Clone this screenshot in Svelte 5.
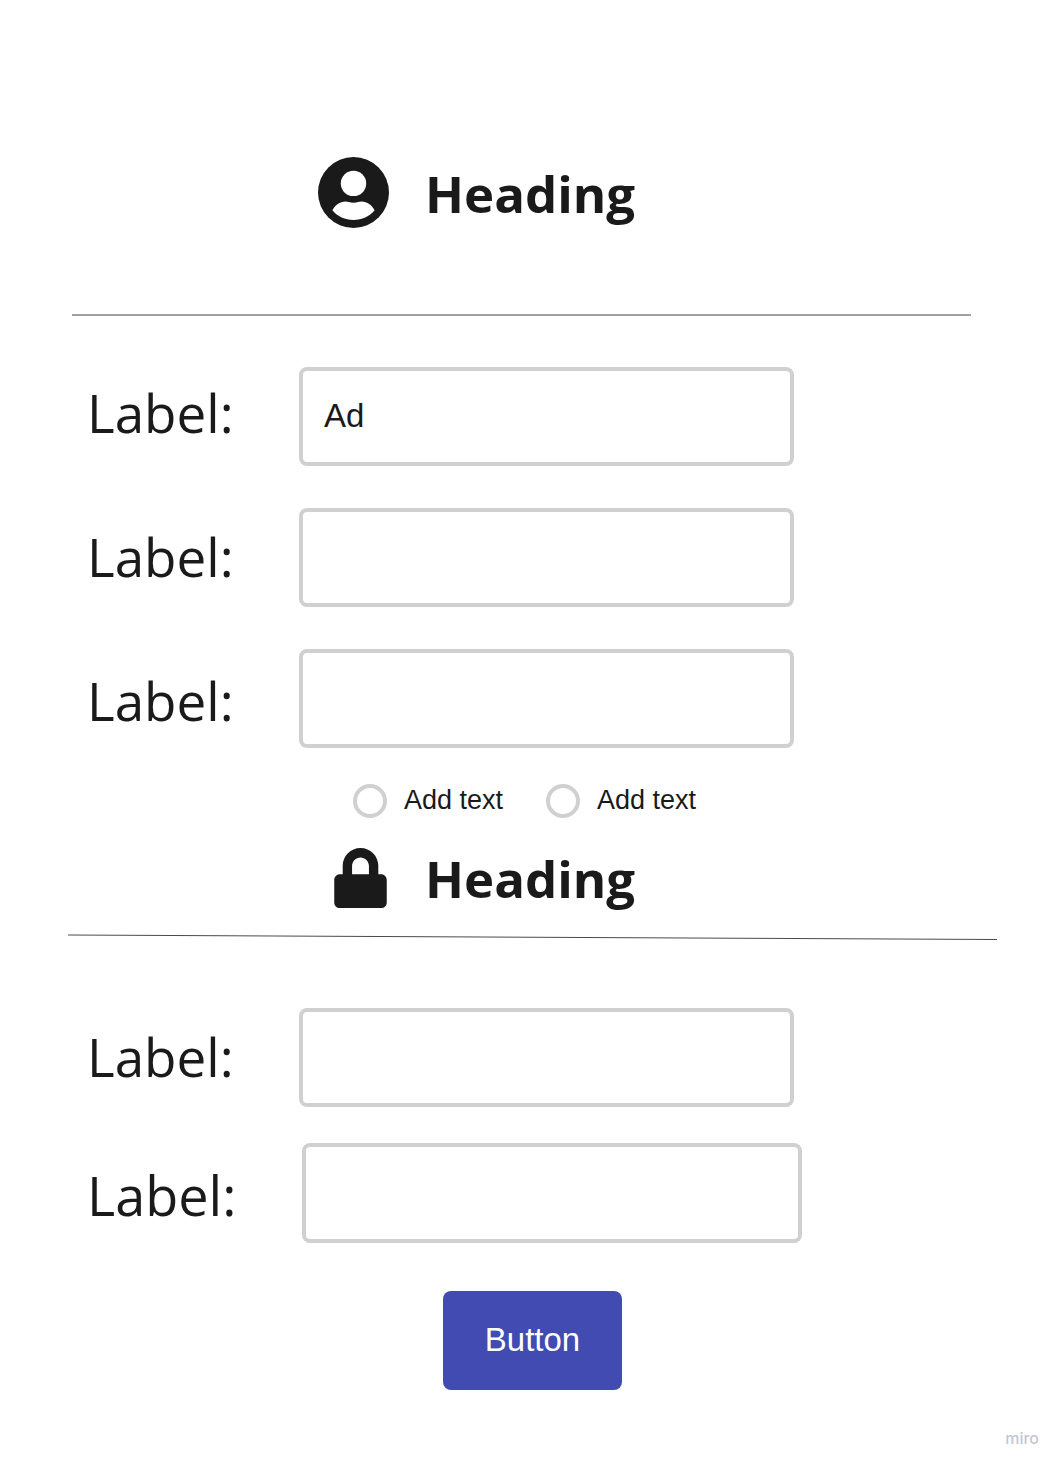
<script>
  let first = $state('Ad');
  let second = $state('');
  let third = $state('');
  let fourth = $state('');
  let fifth = $state('');
  let choice = $state('');
</script>

<main class="page">
  <form onsubmit={(event) => event.preventDefault()}>
    <header class="title">
      <svg class="avatar" viewBox="0 0 71 71" aria-hidden="true">
        <circle cx="35.5" cy="35.5" r="35.5" fill="#1a1a1a" />
        <circle cx="35.5" cy="26.4" r="12.7" fill="#fff" />
        <path
          d="M14.4 53.3C17 48.5 21.8 44.6 27.5 44.6C30 44.6 31.5 45.7 35.5 45.7C39.5 45.7 41 44.6 43.5 44.6C49.2 44.6 54 48.5 56.6 53.3C51.5 59.5 44 63 35.5 63C27 63 19.5 59.5 14.4 53.3Z"
          fill="#fff"
        />
      </svg>
      <h2>Heading</h2>
    </header>

    <hr class="rule" />

    <section class="fields">
      <div class="labels">
        <label for="field-1">Label:</label>
        <label for="field-2">Label:</label>
        <label for="field-3">Label:</label>
      </div>
      <div class="inputs">
        <input id="field-1" type="text" bind:value={first} />
        <input id="field-2" type="text" bind:value={second} />
        <input id="field-3" type="text" bind:value={third} />
      </div>
    </section>

    <div class="choices">
      <label class="choice">
        <input type="radio" name="choice" value="one" bind:group={choice} />
        <span>Add text</span>
      </label>
      <label class="choice">
        <input type="radio" name="choice" value="two" bind:group={choice} />
        <span>Add text</span>
      </label>
    </div>

    <header class="title secure">
      <svg class="lock" viewBox="0 0 448 512" aria-hidden="true">
        <path
          d="M400 224h-24v-72C376 68.2 307.8 0 224 0S72 68.2 72 152v72H48c-26.5 0-48 21.5-48 48v192c0 26.5 21.5 48 48 48h352c26.5 0 48-21.5 48-48V272c0-26.5-21.5-48-48-48zm-104 0H152v-72c0-39.7 32.3-72 72-72s72 32.3 72 72v72z"
          fill="#1a1a1a"
        />
      </svg>
      <h2>Heading</h2>
    </header>

    <svg class="slant" viewBox="0 0 928 6" preserveAspectRatio="none" aria-hidden="true">
      <line x1="0" y1="1" x2="928" y2="5.5" stroke="#4a4a4a" stroke-width="1" vector-effect="non-scaling-stroke" />
    </svg>

    <section class="fields compact">
      <div class="labels">
        <label for="field-4">Label:</label>
        <label class="large" for="field-5">Label:</label>
      </div>
      <div class="inputs">
        <input id="field-4" type="text" bind:value={fourth} />
        <input id="field-5" class="large" type="text" bind:value={fifth} />
      </div>
    </section>

    <button type="submit">Button</button>
  </form>

  <footer>miro</footer>
</main>

<style>
  :global(body) {
    margin: 0;
    background: #fff;
  }

  .page {
    box-sizing: border-box;
    min-height: 100vh;
    padding-top: 157px;
    color: #1a1a1a;
    font-family: 'Open Sans', 'Noto Sans', sans-serif;
  }

  form {
    display: flex;
    flex-direction: column;
    padding: 0 66px 0 68px;
  }

  .title {
    display: flex;
    align-items: flex-start;
    gap: 36px;
    padding-left: 250px;
  }

  .secure {
    align-items: center;
    gap: 38px;
    margin-top: 24px;
    padding-left: 266px;
  }

  .avatar {
    width: 71px;
    height: 71px;
  }

  .lock {
    width: 53px;
    height: 60px;
  }

  h2 {
    margin: 0;
    font-size: 51px;
    line-height: 72px;
    font-weight: 700;
  }

  .rule {
    height: 2px;
    margin: 85px 26px 51px 4px;
    border: 0;
    background: #a0a0a0;
  }

  .slant {
    width: 100%;
    height: 6px;
    margin-top: 20px;
  }

  .fields {
    display: grid;
    grid-template-columns: 212px minmax(0, 1fr);
    padding: 0 195px 0 19px;
  }

  .labels {
    display: flex;
    flex-direction: column;
    gap: 72px;
    padding-top: 10px;
    font-size: 53px;
    line-height: 72px;
  }

  .inputs {
    display: flex;
    flex-direction: column;
    gap: 42px;
    padding-right: 8px;
  }

  .compact {
    margin-top: 68px;
  }

  .compact .labels {
    gap: 66px;
    padding-top: 13px;
  }

  .compact .inputs {
    gap: 36px;
  }

  .labels .large {
    font-size: 54px;
  }

  input[type='text'] {
    box-sizing: border-box;
    width: 100%;
    height: 99px;
    padding: 0 21px 2px;
    border: 4px solid #d0d0d0;
    border-radius: 8px;
    outline: none;
    background: #fff;
    color: #1a1a1a;
    font-family: 'Liberation Sans', Arial, sans-serif;
    font-size: 33px;
  }

  input[type='text'].large {
    width: auto;
    height: 100px;
    margin: 0 -8px 0 3px;
  }

  .choices {
    display: flex;
    gap: 43px;
    margin-top: 36px;
    padding-left: 285px;
    font-family: 'Liberation Sans', Arial, sans-serif;
    font-size: 27px;
    line-height: 32px;
  }

  .choice {
    display: flex;
    gap: 17px;
  }

  .choice input {
    box-sizing: border-box;
    width: 34px;
    height: 34px;
    margin: 0;
    border: 4px solid #d0d0d0;
    border-radius: 50%;
    appearance: none;
    background: #fff;
  }

  .choice input:checked {
    background: #424bb2;
    box-shadow: inset 0 0 0 5px #fff;
  }

  button {
    align-self: center;
    height: 99px;
    margin-top: 48px;
    padding: 0 42px 2px;
    border: 0;
    border-radius: 8px;
    background: #424bb2;
    color: #fff;
    font-family: 'Liberation Sans', Arial, sans-serif;
    font-size: 33px;
    cursor: pointer;
  }

  footer {
    margin-top: 36px;
    padding-right: 24px;
    color: #c6c5d2;
    font-family: Inter, sans-serif;
    font-size: 16px;
    font-weight: 500;
    line-height: 24px;
    text-align: right;
  }
</style>
